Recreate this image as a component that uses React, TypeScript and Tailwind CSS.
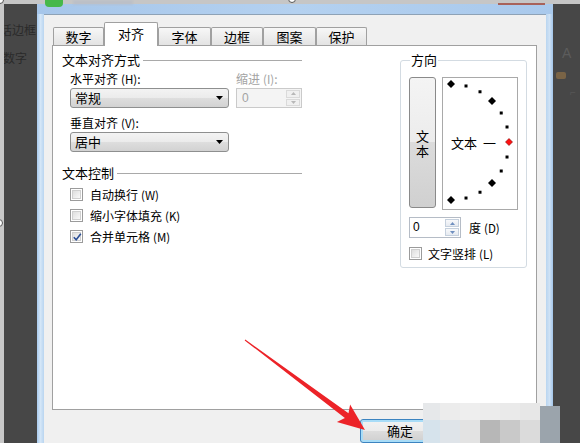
import React from "react";

function Key({ k }: { k: string }) {
  return <span className="ml-[3px] text-[11.5px]">({k})</span>;
}

function Heading({ text }: { text: string }) {
  return (
    <div className="flex items-center h-[14px]">
      <span className="text-[13px] leading-[14px] whitespace-nowrap">{text}</span>
      <div className="flex-1 ml-[3px] h-0 border-t border-[#a9a9a9]" />
    </div>
  );
}

function Combo({ text }: { text: string }) {
  return (
    <div className="w-[159px] h-[20px] rounded-[3px] border border-[#8e8f8f] bg-[linear-gradient(to_bottom,#f3f3f3_0%,#ebebeb_50%,#dedede_50%,#d2d2d2_100%)] flex items-center pl-[4px] pr-[5px]">
      <span className="flex-1 text-[13px] leading-[14px]">{text}</span>
      <svg width="7" height="4" viewBox="0 0 7 4">
        <path d="M0 0H7L3.5 4Z" fill="#000" />
      </svg>
    </div>
  );
}

function Tri({ up, color }: { up: boolean; color: string }) {
  return (
    <svg width="5" height="3" viewBox="0 0 5 3">
      <path d={up ? "M0 3H5L2.5 0Z" : "M0 0H5L2.5 3Z"} fill={color} />
    </svg>
  );
}

function DisabledSpin() {
  return (
    <div className="w-[66px] h-[20px] border border-[#cacaca] bg-[#f4f4f4] flex">
      <span className="flex-1 pl-[5px] text-[12px] leading-[18px] text-[#a3a3a3] font-['Liberation_Sans',sans-serif]">0</span>
      <div className="w-[16px] flex flex-col p-px gap-px">
        <div className="flex-1 border border-[#dadada] bg-[#f0f0f0] flex items-center justify-center">
          <Tri up color="#b8b8b8" />
        </div>
        <div className="flex-1 border border-[#dadada] bg-[#f0f0f0] flex items-center justify-center">
          <Tri up={false} color="#b8b8b8" />
        </div>
      </div>
    </div>
  );
}

function Spin() {
  return (
    <div className="w-[52px] h-[21px] border border-[#b5bcc6] bg-white flex">
      <span className="flex-1 pl-[3px] text-[12px] leading-[19px] font-['Liberation_Sans',sans-serif]">0</span>
      <div className="w-[16px] flex flex-col p-px gap-px">
        <div className="flex-1 border border-[#c5d0dd] bg-linear-to-b from-[#f8f9fb] to-[#e6eaf0] flex items-center justify-center">
          <Tri up color="#6f8fbf" />
        </div>
        <div className="flex-1 border border-[#c5d0dd] bg-linear-to-b from-[#f8f9fb] to-[#e6eaf0] flex items-center justify-center">
          <Tri up={false} color="#6f8fbf" />
        </div>
      </div>
    </div>
  );
}

function Check({ checked }: { checked?: boolean }) {
  return (
    <div className="w-[13px] h-[13px] shrink-0 border border-[#9b9b9b] bg-white p-px">
      <div className="relative w-full h-full border border-[#cfcfcf] bg-linear-to-br from-[#dedede] to-[#f9f9f9]">
        {checked && (
          <svg className="absolute -left-px -top-px" width="11" height="11" viewBox="0 0 11 11">
            <path d="M1.8 5.2L4.2 7.8L8.8 1.8" stroke="#2c4f96" strokeWidth="1.6" fill="none" />
          </svg>
        )}
      </div>
    </div>
  );
}

function CheckRow({ label, k, checked }: { label: string; k: string; checked?: boolean }) {
  return (
    <div className="h-[21px] flex items-center">
      <Check checked={checked} />
      <span className="ml-[7px] text-[12px] leading-[14px] whitespace-nowrap">
        {label}
        <Key k={k} />
      </span>
    </div>
  );
}

function Tab({ label, w, active }: { label: string; w: string; active?: boolean }) {
  if (active) {
    return (
      <div className={`${w} relative z-10 h-[24px] -mb-px bg-white border border-b-0 border-[#a0a0a0] rounded-t-[2px] flex items-center justify-center text-[13px] leading-[14px] pb-[1px]`}>
        {label}
      </div>
    );
  }
  return (
    <div className={`${w} h-[18px] bg-linear-to-b from-[#f7f7f7] to-[#e3e3e3] border border-b-0 border-[#a0a0a0] rounded-t-[2px] flex items-center justify-center text-[13px] leading-[14px]`}>
      {label}
    </div>
  );
}

function Dial() {
  const items: React.ReactNode[] = [];
  for (let i = 0; i <= 12; i++) {
    const a = ((90 - i * 15) * Math.PI) / 180;
    const x = 8 + 58 * Math.cos(a);
    const y = 64 - 58 * Math.sin(a);
    if (i === 6) {
      items.push(
        <polygon key={i} points={`${x},${y - 3.5} ${x + 3.5},${y} ${x},${y + 3.5} ${x - 3.5},${y}`} fill="#ff1010" stroke="#7a0000" strokeWidth="0.6" />
      );
    } else if (i % 3 === 0) {
      items.push(
        <polygon key={i} points={`${x},${y - 4} ${x + 4},${y} ${x},${y + 4} ${x - 4},${y}`} fill="#000" />
      );
    } else {
      items.push(<rect key={i} x={x - 1.5} y={y - 1.5} width="3" height="3" fill="#000" />);
    }
  }
  return (
    <div className="relative w-[76px] h-[133px] border border-[#a9a9a9] bg-white">
      <svg className="absolute left-0 top-0" width="74" height="131" viewBox="0 0 74 131">
        {items}
      </svg>
      <div className="absolute left-[8px] top-[58px] flex text-[13px] leading-[14px] whitespace-nowrap">
        <span>文本</span>
        <span className="ml-[6px]">一</span>
      </div>
    </div>
  );
}

export default function App() {
  return (
    <div className="relative w-[580px] h-[443px] overflow-hidden bg-[#474747] font-['Noto_Sans_CJK_SC','Noto_Sans',sans-serif] text-black">
      <div className="h-[4px] bg-[#c6c6c6]" />
      <div className="flex h-[439px]">
        <div className="w-[4px] bg-[#c8c8c8]" />
        <div className="w-[33px] overflow-hidden text-[12px] leading-[14px] text-[#2a2a2a] pt-[19px] flex flex-col">
          <span className="-ml-[4px] whitespace-nowrap">话边框</span>
          <span className="-ml-[1px] mt-[14px] whitespace-nowrap">数字</span>
        </div>

        {/* dialog window */}
        <div className="w-[516px] h-full flex flex-col">
          <div className="h-[10px] bg-linear-to-r from-[#a6c6ea] via-[#b4d1f0] to-[#a9c9ec]" />
          <div className="flex-1 flex">
            <div className="w-[7px] bg-linear-to-r from-[#a9cbee] via-[#d4e6f7] to-[#b9d5f0]" />
            <div className="w-[502px] bg-[#f0f0f0] border-t border-[#8ea2b6] flex flex-col pl-[8px] pt-[7px]">
              {/* tabs */}
              <div className="h-[23px] flex items-end pl-[1px]">
                <Tab label="数字" w="w-[51px]" />
                <Tab label="对齐" w="w-[54px]" active />
                <Tab label="字体" w="w-[53px]" />
                <Tab label="边框" w="w-[52px]" />
                <Tab label="图案" w="w-[53px]" />
                <Tab label="保护" w="w-[51px]" />
              </div>
              {/* panel */}
              <div className="w-[485px] h-[365px] bg-white border border-[#a0a0a0] flex pl-[9px] pt-[7px]">
                <div className="w-[240px] flex flex-col">
                  <Heading text="文本对齐方式" />
                  <div className="pl-[8px] flex flex-col">
                    <div className="mt-[6px] h-[12px] flex text-[12px] leading-[12px] whitespace-nowrap">
                      <span className="w-[166px]">
                        水平对齐<Key k="H" />:
                      </span>
                      <span className="text-[#a3a3a3]">
                        缩进<Key k="I" />:
                      </span>
                    </div>
                    <div className="mt-[3px] flex gap-[7px]">
                      <Combo text="常规" />
                      <DisabledSpin />
                    </div>
                    <div className="mt-[9px] h-[12px] text-[12px] leading-[12px] whitespace-nowrap">
                      垂直对齐<Key k="V" />:
                    </div>
                    <div className="mt-[3px] flex">
                      <Combo text="居中" />
                    </div>
                  </div>
                  <div className="mt-[14px]">
                    <Heading text="文本控制" />
                  </div>
                  <div className="pl-[8px] mt-[4px] flex flex-col">
                    <CheckRow label="自动换行" k="W" />
                    <CheckRow label="缩小字体填充" k="K" />
                    <CheckRow label="合并单元格" k="M" checked />
                  </div>
                </div>

                <fieldset className="ml-[98px] w-[127px] h-[215px] border border-[#d3dbe2] rounded-[3px] px-[8px]">
                  <legend className="ml-[1px] px-[1px] text-[13px] leading-[14px]">方向</legend>
                  <div className="mt-[10px] flex gap-[6px] items-start">
                    <div className="w-[27px] h-[131px] rounded-[3px] border border-[#8a8a8a] bg-[linear-gradient(to_bottom,#f4f4f4_0%,#ececec_50%,#dcdcdc_50%,#d0d0d0_100%)] flex items-center justify-center">
                      <span className="w-[13px] text-[13px] leading-[15px] text-center break-all">文本</span>
                    </div>
                    <Dial />
                  </div>
                  <div className="mt-[7px] flex items-center">
                    <Spin />
                    <span className="ml-[8px] text-[12px] leading-[14px] whitespace-nowrap">
                      度<Key k="D" />
                    </span>
                  </div>
                  <div className="mt-[9px] h-[13px] flex items-center">
                    <Check />
                    <span className="ml-[6px] text-[12px] leading-[14px] whitespace-nowrap">
                      文字竖排<Key k="L" />
                    </span>
                  </div>
                </fieldset>
              </div>
              {/* bottom buttons */}
              <div className="mt-[9px] ml-[308px]">
                <button className="w-[80px] h-[24px] rounded-[3px] border border-[#3c84c0] shadow-[inset_0_0_0_2px_#a8dcf7] bg-[linear-gradient(to_bottom,#f2f2f2_0%,#ebebeb_50%,#dddddd_50%,#cfcfcf_100%)] text-[13px] leading-[14px] flex items-center justify-center">
                  确定
                </button>
              </div>
            </div>
            <div className="w-[7px] bg-linear-to-r from-[#b9d5f0] via-[#cfe2f5] to-[#a4c6ea]" />
          </div>
        </div>

        {/* right dark strip */}
        <div className="flex-1 flex flex-col pt-[42px] pl-[9px] text-[#5c5c5c]">
          <span className="text-[14px] leading-[14px] font-['Liberation_Sans',sans-serif]">A</span>
          <div className="mt-[12px] -ml-[6px] w-[10px] h-[7px] rounded-[2px] bg-[#7a6446]" />
          <span className="mt-[8px] ml-[8px] text-[10px] leading-[10px] text-[#565656]">⌐</span>
        </div>
      </div>

      {/* overlays: title bar decorations */}
      <div className="absolute left-[45px] top-0 w-[18px] h-[7px] rounded-b-[4px] bg-[#46b84a]" />
      <div className="absolute left-[73px] top-0 w-[60px] h-[5px] bg-[#b5bcc8] opacity-60 blur-[1px]" />
      <div className="absolute left-[498px] top-[3px] w-[47px] h-[2px] bg-[#a8625a]" />

      {/* selection handles */}
      <div className="absolute -left-[4px] -top-[4px] w-[8px] h-[8px] rounded-full border border-[#555] bg-white" />
      <div className="absolute left-[288px] -top-[5px] w-[8px] h-[8px] rounded-full border border-[#555] bg-white" />
      <div className="absolute -left-[5px] top-[219px] w-[8px] h-[8px] rounded-full border border-[#555] bg-white" />

      {/* mosaic */}
      <div className="absolute left-[423px] top-[403px] w-[117px] h-[40px] flex flex-col">
        <div className="h-[17px] flex">
          <div className="w-[17px] bg-[#e6e8ea]" />
          <div className="w-[20px] bg-[#ececec]" />
          <div className="w-[20px] bg-[#eeeeee]" />
          <div className="w-[20px] bg-[#ececec]" />
          <div className="w-[20px] bg-[#eaeaea]" />
          <div className="w-[20px] bg-[#e7e7e7]" />
        </div>
        <div className="flex-1 flex">
          <div className="w-[17px] bg-[#d6e3ec]" />
          <div className="w-[20px] bg-[#dfe4e9]" />
          <div className="w-[20px] bg-[#e3e3e3]" />
          <div className="w-[20px] bg-[#b7b7b7]" />
          <div className="w-[20px] bg-[#c9c9c9]" />
          <div className="w-[20px] bg-[#dbdbdb]" />
        </div>
      </div>
      <div className="absolute left-[540px] top-[406px] w-[20px] h-[37px] bg-[#9ba4ac]" />

      {/* red arrow */}
      <svg className="absolute left-0 top-0 pointer-events-none" width="580" height="443" viewBox="0 0 580 443">
        <polygon
          points="245.3,339.6 348.5,413.3 350.1,404.5 365,430 336.9,422.1 344.9,418.1 244.7,340.4"
          fill="#ec2328"
        />
      </svg>
    </div>
  );
}
